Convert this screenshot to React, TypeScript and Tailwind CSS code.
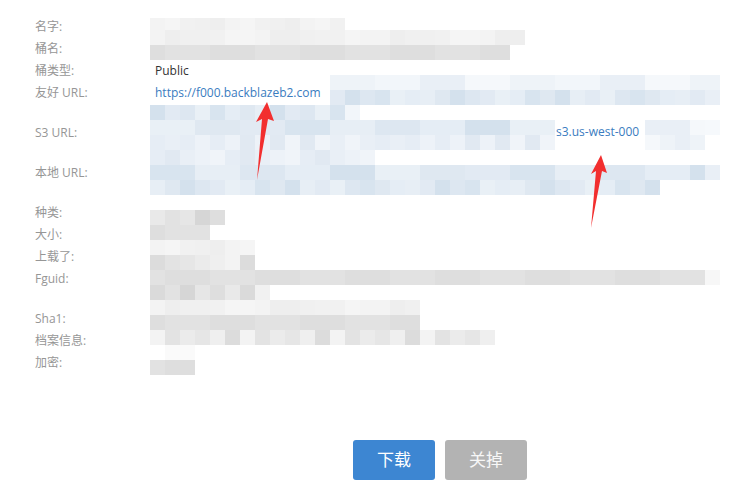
import React from "react";

const cjk = "font-['Open_Sans','Noto_Sans_CJK_SC',sans-serif]";

const blue = ["#dfe8f1", "#e5edf5", "#d8e4ef", "#e9f0f6", "#dde7f1", "#e2eaf3", "#d4e1ed", "#e7eef5"];
const blueLight = ["#eef3f8", "#f2f6fa", "#e9eff6", "#f5f8fb"];
const blueMix = ["#e6edf5", "#edf2f8", "#e1e9f2", "#f0f4f9", "#e9eff6"];
const gray = ["#dadada", "#e2e2e2", "#d6d6d6", "#e6e6e6", "#dedede", "#e9e9e9"];
const grayLight = ["#f3f3f3", "#f0f0f0", "#f5f5f5", "#eeeeee", "#f1f1f1"];
const grayMix = ["#e6e6e6", "#efefef", "#dcdcdc", "#f3f3f3", "#e3e3e3", "#ebebeb"];

type Seg = [number, number, string[]];
type Row = { h: number; segs: Seg[] };

// pixelated (blurred) values, one row = 15px mosaic line, x in page px
const rows: Row[] = [
  { h: 12, segs: [[150, 345, grayLight]] },
  { h: 15, segs: [[150, 525, grayLight]] },
  { h: 15, segs: [[150, 510, gray]] },
  { h: 15, segs: [] },
  { h: 15, segs: [[330, 720, blueLight]] },
  { h: 15, segs: [[330, 705, blue], [705, 720, blueLight]] },
  { h: 15, segs: [[150, 345, blue], [345, 360, blueLight]] },
  { h: 15, segs: [[150, 555, blue], [640, 705, blueLight], [705, 720, ["#f6f9fc"]]] },
  { h: 15, segs: [[150, 555, blueMix], [640, 705, blueLight]] },
  { h: 15, segs: [[150, 375, blueMix]] },
  { h: 15, segs: [[150, 705, blue], [705, 720, blueLight]] },
  { h: 15, segs: [[150, 660, blue]] },
  { h: 15, segs: [] },
  { h: 15, segs: [[150, 225, gray]] },
  { h: 15, segs: [[150, 210, gray]] },
  { h: 15, segs: [[150, 255, grayLight]] },
  { h: 15, segs: [[150, 255, grayMix]] },
  { h: 15, segs: [[150, 705, gray], [705, 720, ["#f7f7f7"]]] },
  { h: 15, segs: [[150, 255, gray], [255, 270, grayLight]] },
  { h: 15, segs: [[150, 420, grayLight]] },
  { h: 15, segs: [[150, 420, gray]] },
  { h: 15, segs: [[150, 495, grayMix]] },
  { h: 15, segs: [[165, 195, ["#fafafa"]]] },
  { h: 15, segs: [[150, 195, gray]] },
];

const cellColor = (r: number, c: number, segs: Seg[]) => {
  const x = 150 + c * 15;
  const s = segs.find(([a, b]) => x >= a && x < b);
  if (!s) return "transparent";
  const p = s[2];
  return p[(c * 7 + r * 5 + ((c * r) % 3)) % p.length];
};

const labelGroups = [
  ["名字:", "桶名:", "桶类型:", "友好 URL:"],
  ["S3 URL:"],
  ["本地 URL:"],
  ["种类:", "大小:", "上载了:", "Fguid:"],
  ["Sha1:", "档案信息:", "加密:"],
];

const Arrows = () => (
  <svg className="absolute left-0 top-0 pointer-events-none" width="744" height="498">
    <polygon points="267,102 274,121 268,119 257,180 262,119 256,122" fill="#f22f2f" />
    <polygon points="601,155 607,173 602,171 591,228 596,171 591,174" fill="#f22f2f" />
  </svg>
);

export default function App() {
  return (
    <div className={`relative w-[744px] h-[498px] bg-white overflow-hidden ${cjk}`}>
      <div className="flex">
        <div className="w-[150px] pl-[35px] pt-[16px] flex flex-col gap-[18px] text-[12px] text-[#969696]">
          {labelGroups.map((g, i) => (
            <div key={i} className="flex flex-col">
              {g.map((l) => (
                <div key={l} className="h-[22px] leading-[22px] whitespace-nowrap">
                  {l}
                </div>
              ))}
            </div>
          ))}
        </div>
        <div className="relative flex-1 pt-[18px]">
          <div className="flex flex-col">
            {rows.map((row, r) => (
              <div key={r} className="flex" style={{ height: row.h }}>
                {Array.from({ length: 38 }).map((_, c) => (
                  <div key={c} className="w-[15px] shrink-0" style={{ backgroundColor: cellColor(r, c, row.segs) }} />
                ))}
              </div>
            ))}
          </div>
          <div className="absolute left-[5px] top-[60px] h-[22px] leading-[22px] text-[12px] text-[#333]">Public</div>
          <div className="absolute left-[5px] top-[82px] h-[22px] leading-[22px] text-[12px] text-[#3a7cc0] bg-white pr-[2px]">
            https://f000.backblazeb2.com
          </div>
          <div className="absolute left-[406px] top-[121px] h-[22px] leading-[22px] text-[12px] text-[#3a7cc0]">
            s3.us-west-000
          </div>
        </div>
      </div>
      <div className="flex justify-center gap-[10px] pl-[150px] pr-[14px] mt-[65px]">
        <button className="w-[82px] h-[40px] rounded-[3px] bg-[#3d86d2] text-white text-[17px]">下载</button>
        <button className="w-[82px] h-[40px] rounded-[3px] bg-[#b3b3b3] text-[#f7f7f7] text-[17px]">关掉</button>
      </div>
      <Arrows />
    </div>
  );
}
